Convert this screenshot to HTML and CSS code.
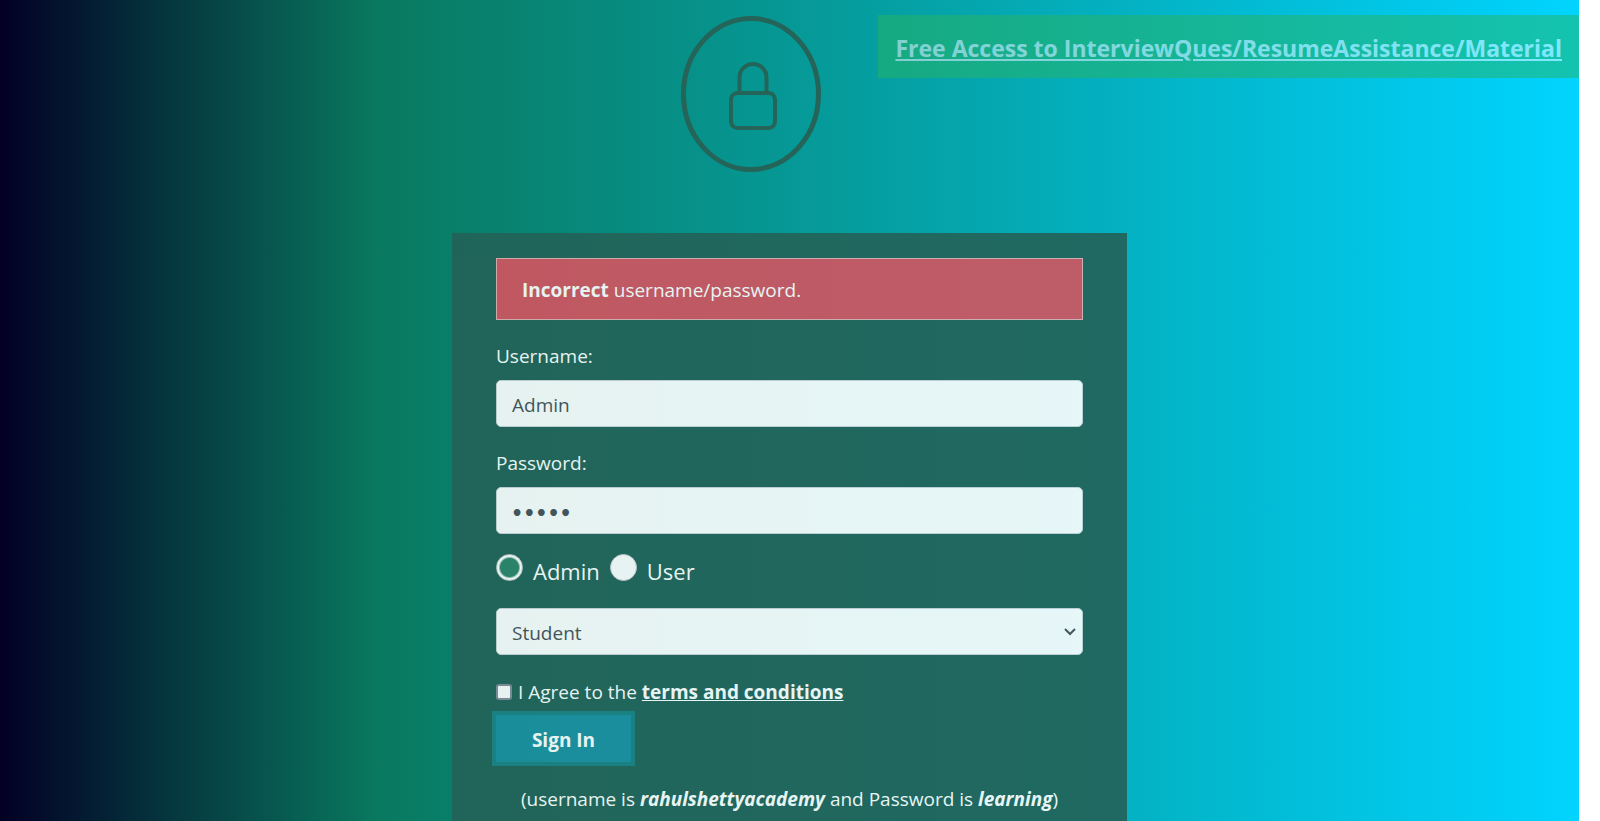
FILE: index.html
```html
<!DOCTYPE html>
<html lang="en">
<head>
<meta charset="utf-8">
<title>Login</title>
<link rel="stylesheet" href="styles.css">
</head>
<body>
<div class="page">
  <header class="top">
    <svg class="lock" width="140" height="156" viewBox="0 0 140 156" fill="none" stroke="currentColor" aria-hidden="true">
      <ellipse cx="70" cy="78" rx="67.5" ry="75.5" stroke-width="5"/>
      <rect x="50" y="77" width="44" height="35" rx="6.5" stroke-width="4"/>
      <path d="M58.500 77V61.500a13.500 13.500 0 0 1 27 0V77" stroke-width="4"/>
    </svg>
    <a class="banner" href="#">Free Access to InterviewQues/ResumeAssistance/Material</a>
  </header>
  <main>
    <form class="card">
      <div class="alert" role="alert"><strong>Incorrect</strong> username/password.</div>
      <div class="field">
        <label for="username">Username:</label>
        <input class="control" id="username" type="text" value="Admin">
      </div>
      <div class="field">
        <label for="password">Password:</label>
        <input class="control" id="password" type="password" value="admin">
      </div>
      <div class="roles">
        <label class="role"><input type="radio" name="role" checked><span>Admin</span></label>
        <label class="role"><input type="radio" name="role"><span>User</span></label>
      </div>
      <div class="picker">
        <select class="control" aria-label="Occupation">
          <option>Student</option>
          <option>Teacher</option>
          <option>Consultant</option>
        </select>
        <svg class="chevron" width="12" height="8" viewBox="0 0 12 8" fill="none" stroke="currentColor" stroke-width="2" aria-hidden="true">
          <path d="M1 1l5 5 5-5"/>
        </svg>
      </div>
      <div class="terms">
        <input id="terms" type="checkbox">
        <label for="terms">I Agree to the <a href="#">terms and conditions</a></label>
      </div>
      <button class="submit" type="button">Sign In</button>
      <p class="hint">(username is <b><i>rahulshettyacademy</i></b> and Password is <b><i>learning</i></b>)</p>
    </form>
  </main>
</div>
</body>
</html>
```
FILE: styles.css
```css
* { box-sizing: border-box; }

html {
  height: 100%;
  background: #fff;
}

body {
  height: 100%;
  margin: 0;
  overflow: hidden;
  font: 19px/30px "Segoe UI", "Open Sans", sans-serif;
  color: #fff;
}

.page {
  min-height: 100%;
  margin-right: 21px;
  background: linear-gradient(90deg, #020024 0%, #09795f 24%, #00d4ff 100%);
}

.top {
  display: grid;
  grid-template-columns: 1fr auto 1fr;
  align-items: start;
  padding-top: 15px;
  height: 233px;
}

.lock {
  grid-column: 1 / -1;
  grid-row: 1;
  justify-self: center;
  margin: 1px 77px 0 0;
  color: #256459;
}

.banner {
  grid-column: 1 / -1;
  grid-row: 1;
  justify-self: end;
  padding: 15px 17px 12px;
  background: #28b463;
  opacity: .5;
  color: #fff;
  font-size: 23px;
  line-height: 36px;
  font-weight: 700;
  white-space: nowrap;
}

.card {
  width: 675px;
  max-width: 100%;
  margin: 0 auto;
  padding: 25px 44px;
  background: #246258;
  opacity: .9;
}

.alert {
  margin-bottom: 21px;
  padding: 16px 25px 14px;
  border: 1px solid #e4aeb3;
  background: #d35460;
}

.field { margin-bottom: 21px; }

.field label {
  display: block;
  margin-bottom: 9px;
}

.control {
  display: block;
  width: 100%;
  height: 47px;
  padding: 2px 15px 0;
  border: 1px solid #ced4da;
  border-radius: 5px;
  background: #fff;
  color: #495057;
  font: inherit;
}

#password {
  padding: 5px 14px 0;
  font-family: "DejaVu Sans", sans-serif;
  font-weight: 700;
}

.picker { position: relative; }

.picker .control { appearance: none; }

.chevron {
  position: absolute;
  top: 20px;
  right: 7px;
  color: #495057;
  pointer-events: none;
}

.roles {
  display: flex;
  gap: 10px;
  margin: -1px 0 22px;
}

.role {
  display: flex;
  gap: 10px;
  height: 32px;
  font-size: 22px;
}

.role span { margin-top: 2px; }

.role input {
  appearance: none;
  width: 27px;
  height: 27px;
  margin: 0;
  border: 1px solid #ccc;
  border-radius: 50%;
  background: #fff;
}

.role input:checked {
  background: radial-gradient(circle, #2e8268 9px, #fff 11px);
}

.terms {
  display: flex;
  align-items: center;
  gap: 6px;
  margin-top: 22px;
}

.terms input {
  appearance: none;
  width: 16px;
  height: 16px;
  margin: 0;
  border: 2px solid #868c9a;
  border-radius: 3px;
  background: #fff;
}

.terms a {
  color: #fff;
  font-weight: 700;
}

.submit {
  display: block;
  width: 135px;
  height: 47px;
  margin-top: 8px;
  padding: 2px 0 0;
  border: 0;
  background: #1d8fa0;
  box-shadow: 0 0 0 4px #1d8084;
  color: #fff;
  font: inherit;
  font-weight: 700;
}

.hint {
  margin: 22px 0 0;
  text-align: center;
  white-space: nowrap;
}
```
